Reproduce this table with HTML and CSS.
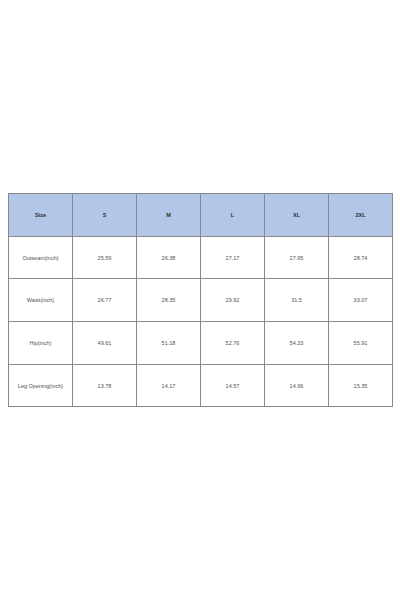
FILE: index.html
```html
<!DOCTYPE html>
<html>
<head>
<meta charset="utf-8">
<link rel="stylesheet" href="styles.css">
</head>
<body>
<div class="page">
<table class="sizes">
<tr class="head"><th>Size</th><th>S</th><th>M</th><th>L</th><th>XL</th><th>2XL</th></tr>
<tr><td>Outseam(inch)</td><td>25.59</td><td>26.38</td><td>27.17</td><td>27.95</td><td>28.74</td></tr>
<tr><td>Waist(inch)</td><td>26.77</td><td>28.35</td><td>29.92</td><td>31.5</td><td>33.07</td></tr>
<tr><td>Hip(inch)</td><td>49.61</td><td>51.18</td><td>52.76</td><td>54.33</td><td>55.91</td></tr>
<tr><td>Leg Opening(inch)</td><td>13.78</td><td>14.17</td><td>14.57</td><td>14.96</td><td>15.35</td></tr>
</table>
</div>
</body>
</html>
```
FILE: styles.css
```css
html, body {
  margin: 0;
  padding: 0;
  background: #ffffff;
}
.page {
  width: 400px;
  height: 600px;
  padding: 193px 8px 0 8px;
  box-sizing: border-box;
}
.sizes {
  border-collapse: collapse;
  width: 385px;
  table-layout: fixed;
  font-family: "Liberation Sans", Arial, sans-serif;
  font-size: 5.5px;
  color: #505050;
}
.sizes td, .sizes th {
  border: 1px solid #8a8a8a;
  height: 41.7px;
  padding: 0;
  text-align: center;
  vertical-align: middle;
}
.sizes th {
  background: #b4c6e7;
  color: #2a2a2a;
  font-weight: bold;
}
```
